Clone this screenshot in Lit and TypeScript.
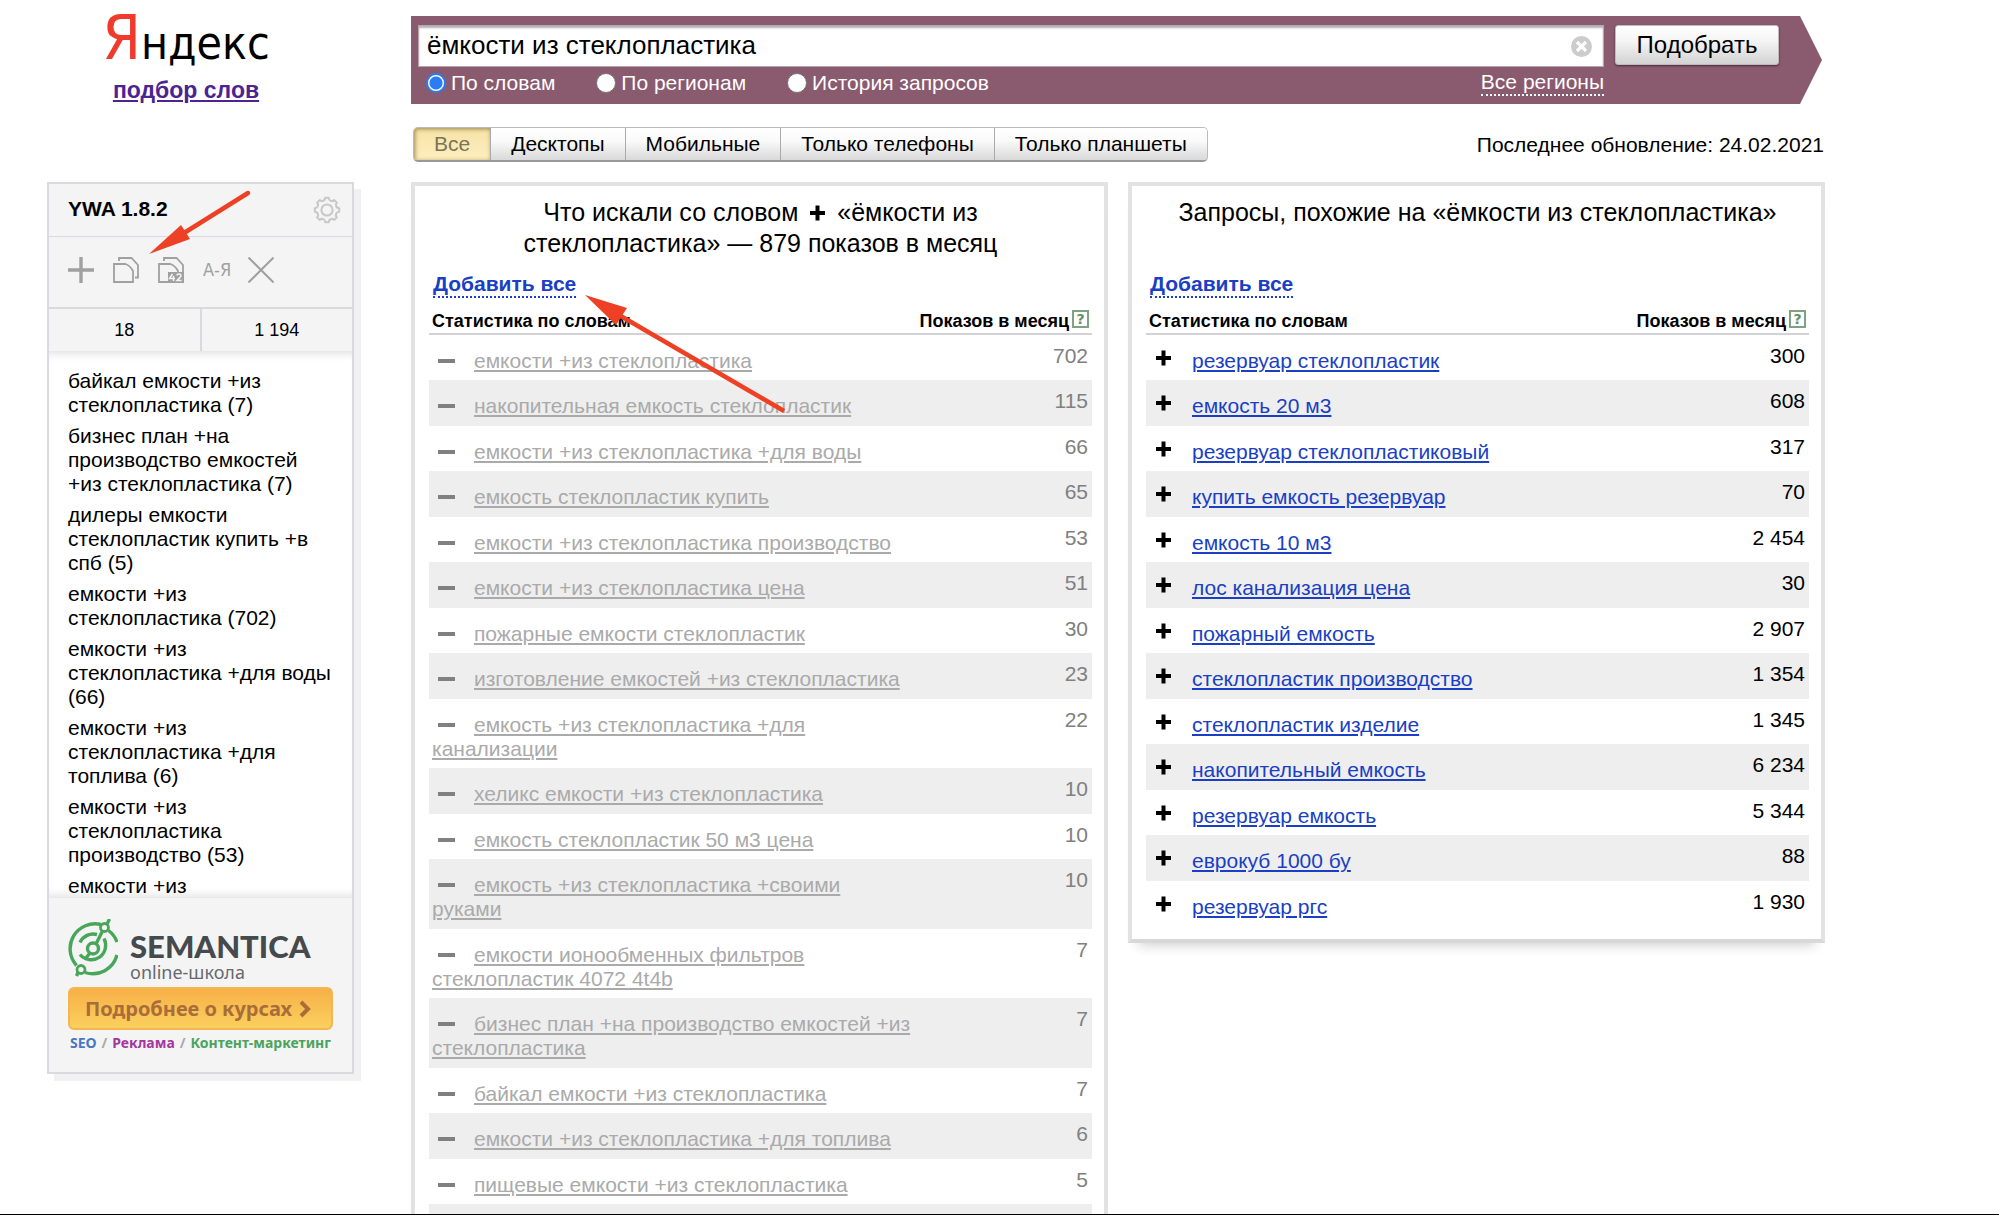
import { LitElement, html, css, svg } from "lit";
import { customElement, property } from "lit/decorators.js";

interface Phrase {
  text: string;
  count: string;
}

const p = (text: string, count: string): Phrase => ({ text, count });

const MATCHED: Phrase[] = [
  p("емкости +из стеклопластика", "702"),
  p("накопительная емкость стеклопластик", "115"),
  p("емкости +из стеклопластика +для воды", "66"),
  p("емкость стеклопластик купить", "65"),
  p("емкости +из стеклопластика производство", "53"),
  p("емкости +из стеклопластика цена", "51"),
  p("пожарные емкости стеклопластик", "30"),
  p("изготовление емкостей +из стеклопластика", "23"),
  p("емкость +из стеклопластика +для канализации", "22"),
  p("хеликс емкости +из стеклопластика", "10"),
  p("емкость стеклопластик 50 м3 цена", "10"),
  p("емкость +из стеклопластика +своими руками", "10"),
  p("емкости ионообменных фильтров стеклопластик 4072 4t4b", "7"),
  p("бизнес план +на производство емкостей +из стеклопластика", "7"),
  p("байкал емкости +из стеклопластика", "7"),
  p("емкости +из стеклопластика +для топлива", "6"),
  p("пищевые емкости +из стеклопластика", "5"),
];

const SIMILAR: Phrase[] = [
  p("резервуар стеклопластик", "300"),
  p("емкость 20 м3", "608"),
  p("резервуар стеклопластиковый", "317"),
  p("купить емкость резервуар", "70"),
  p("емкость 10 м3", "2 454"),
  p("лос канализация цена", "30"),
  p("пожарный емкость", "2 907"),
  p("стеклопластик производство", "1 354"),
  p("стеклопластик изделие", "1 345"),
  p("накопительный емкость", "6 234"),
  p("резервуар емкость", "5 344"),
  p("еврокуб 1000 бу", "88"),
  p("резервуар ргс", "1 930"),
];

const COLLECTED = [
  "байкал емкости +из стеклопластика (7)",
  "бизнес план +на производство емкостей +из стеклопластика (7)",
  "дилеры емкости стеклопластик купить +в спб (5)",
  "емкости +из стеклопластика (702)",
  "емкости +из стеклопластика +для воды (66)",
  "емкости +из стеклопластика +для топлива (6)",
  "емкости +из стеклопластика производство (53)",
  "емкости +из",
];

const MODES = ["По словам", "По регионам", "История запросов"];
const DEVICES = ["Все", "Десктопы", "Мобильные", "Только телефоны", "Только планшеты"];

const shared = css`
  * {
    box-sizing: border-box;
  }
  button {
    font: inherit;
    color: inherit;
    margin: 0;
    padding: 0;
    border: 0;
    background: none;
    cursor: pointer;
  }
  svg {
    display: block;
  }
`;

const plusIcon = html`<svg width="15" height="16" viewBox="0 0 15 16" aria-hidden="true">
  <path d="M7.5 0.5v15M0 8h15" stroke="currentColor" stroke-width="4" />
</svg>`;

const minusIcon = html`<svg width="17" height="16" viewBox="0 0 17 16" aria-hidden="true">
  <path d="M0 8h17" stroke="currentColor" stroke-width="4" />
</svg>`;

/** A bordered panel with a title slot and a table of phrases. */
@customElement("phrase-panel")
export class PhrasePanel extends LitElement {
  @property({ attribute: false }) rows: Phrase[] = [];
  @property({ type: Boolean }) added = false;
  @property({ type: Boolean }) more = false;

  static styles = [
    shared,
    css`
      :host {
        display: block;
        border: 4px solid #e2e2e2;
        border-bottom-color: #d8d8d8;
        background: #fff;
        padding: 11px 12px 13px 14px;
        box-shadow: 0 12px 12px -10px rgba(0, 0, 0, 0.2);
      }
      .title {
        margin: 0;
        padding: 0 26px;
        min-height: 62px;
        font-size: 25px;
        line-height: 31px;
        font-weight: 400;
        text-align: center;
      }
      .add-all {
        display: block;
        margin: 13px 0 10px 4px;
        height: 26px;
        line-height: 24px;
        font-weight: 700;
        color: #1a3fc4;
        border-bottom: 2px dotted #1a3fc4;
      }
      .table {
        width: 100%;
        table-layout: fixed;
        border-collapse: collapse;
      }
      .head {
        padding: 0 3px;
        height: 26px;
        font-size: 18px;
        line-height: 22px;
        border-bottom: 2px solid #d3d1da;
        text-align: left;
        white-space: nowrap;
      }
      .head.phrase {
        width: 73%;
      }
      .head-num {
        display: flex;
        justify-content: flex-end;
        gap: 3px;
      }
      .help {
        width: 17px;
        height: 18px;
        border: 2px solid #7fa283;
        color: #5f9166;
        font: 700 14px/14px "DejaVu Sans", sans-serif;
      }
      .row:nth-child(even) {
        background: #eee;
      }
      .cell {
        vertical-align: top;
        padding: 14px 1px 7px 3px;
        line-height: 24px;
      }
      .row:nth-child(even) .cell {
        padding-bottom: 8px;
      }
      .cell.num,
      .row:nth-child(even) .cell.num {
        padding: 9px 4px 0 0;
        text-align: right;
      }
      .toggle {
        width: 42px;
        height: 16px;
        padding-left: 6px;
        vertical-align: -1px;
      }
      .toggle.plus {
        width: 43px;
        padding-left: 7px;
        vertical-align: 2px;
      }
      .link {
        color: #1a3fc4;
      }
      .added .link {
        color: #aaa;
      }
      .added .cell {
        color: #808080;
      }
    `,
  ];

  render() {
    return html`
      <h2 class="title"><slot></slot></h2>
      <button class="add-all">Добавить все</button>
      <table class="table ${this.added ? "added" : ""}">
        <thead>
          <tr>
            <th class="head phrase">Статистика по словам</th>
            <th class="head">
              <div class="head-num">Показов в месяц<button class="help">?</button></div>
            </th>
          </tr>
        </thead>
        <tbody>
          ${this.rows.map(
            (r) => html`<tr class="row">
              <td class="cell"><button class="toggle ${this.added ? "minus" : "plus"}">${this.added ? minusIcon : plusIcon}</button><a class="link" href="#">${r.text}</a></td>
              <td class="cell num">${r.count}</td>
            </tr>`,
          )}
          ${this.more ? html`<tr class="row"><td class="cell">&nbsp;</td><td class="cell num"></td></tr>` : null}
        </tbody>
      </table>
    `;
  }
}

/** The side widget that collects chosen phrases. */
@customElement("phrase-collector")
export class PhraseCollector extends LitElement {
  static styles = [
    shared,
    css`
      :host {
        display: flex;
        flex-direction: column;
        height: 892px;
        border: 2px solid #d9dadf;
        background: #f4f4f4;
        box-shadow: 7px 7px 0 #f1f1f1;
      }
      .header {
        display: flex;
        align-items: center;
        justify-content: space-between;
        height: 53px;
        padding: 0 11px 0 19px;
        border-bottom: 1px solid #d9dadf;
      }
      .name {
        margin: 0;
        padding-bottom: 2px;
        font-size: 21px;
        line-height: 24px;
      }
      .gear {
        color: #c8c8c8;
      }
      .tools {
        display: flex;
        gap: 19px;
        height: 72px;
        padding: 20px 19px 0;
        border-bottom: 2px solid #d9dadf;
        color: #a0a0a0;
      }
      .tool {
        flex: none;
        width: 26px;
        height: 26px;
      }
      .sort {
        font-family: "DejaVu Sans Condensed", "DejaVu Sans", sans-serif;
        font-size: 18px;
        line-height: 26px;
        white-space: nowrap;
      }
      .counts {
        display: flex;
        height: 42px;
        font-size: 18px;
        line-height: 42px;
        text-align: center;
      }
      .count {
        flex: 1;
      }
      .count + .count {
        border-left: 2px solid #d9dadf;
      }
      .list {
        flex: 1;
        min-height: 0;
        overflow: hidden;
        display: flex;
        flex-direction: column;
        gap: 7px;
        margin: 0;
        padding: 18px 16px 0 19px;
        list-style: none;
        line-height: 24px;
        background: #fff;
        box-shadow:
          inset 0 10px 10px -8px rgba(0, 0, 0, 0.14),
          inset 0 -10px 10px -8px rgba(0, 0, 0, 0.14);
      }
      .item {
        flex: none;
      }
      .promo {
        flex: none;
        height: 174px;
        padding: 21px 19px 0;
      }
      .brand {
        display: flex;
        gap: 12px;
        height: 58px;
      }
      .brand-name {
        padding-top: 10px;
        color: #464a4d;
        font: 900 31px/34px Lato, sans-serif;
      }
      .brand-sub {
        color: #666a6c;
        font: 400 18px/18px "Noto Sans", sans-serif;
      }
      .more {
        display: flex;
        align-items: center;
        justify-content: space-between;
        width: 100%;
        height: 43px;
        margin-top: 10px;
        padding: 0 20px 0 15px;
        border: 2px solid #f3b650;
        border-radius: 6px;
        background: linear-gradient(#f7b047, #fbd05e);
        color: #a86d39;
        font: 700 20px/24px "Noto Sans", sans-serif;
        white-space: nowrap;
      }
      .topics {
        display: flex;
        justify-content: space-between;
        padding: 3px 2px 0;
        font: 700 14px/20px "Noto Sans", sans-serif;
        color: #aaa;
      }
      .seo {
        color: #4a78bf;
      }
      .ads {
        color: #a4399d;
      }
      .content {
        color: #4ba35c;
      }
    `,
  ];

  render() {
    const teeth = Array.from({ length: 8 }, (_, i) => i * 45);
    return html`
      <div class="header">
        <h1 class="name">YWA 1.8.2</h1>
        <button class="gear" aria-label="Настройки">
          <svg width="28" height="28" viewBox="0 0 28 28" fill="none" stroke="currentColor" stroke-width="2" stroke-linejoin="round">
            <circle cx="14" cy="14" r="5.6" />
            ${teeth.map(
              (a) => svg`<path transform="rotate(${a} 14 14)" d="M10.6 4.6 Q12 4.2 12.2 1.8 H15.8 Q16 4.2 17.4 4.6 Q18.8 5.6 20.4 4.6" />`,
            )}
          </svg>
        </button>
      </div>
      <div class="tools">
        <button class="tool" aria-label="Добавить">
          <svg width="26" height="26" viewBox="0 0 26 26"><path d="M13 0v26M0 13h26" stroke="currentColor" stroke-width="3.4" /></svg>
        </button>
        <button class="tool" aria-label="Копировать">
          <svg width="26" height="26" viewBox="0 0 26 26" fill="none" stroke="currentColor" stroke-width="1.8">
            <path d="M1 25V7h11.500q5 2 7.500 7v11z" />
            <path d="M6 4V1h12.500L25 8v12.500h-3" />
          </svg>
        </button>
        <button class="tool" aria-label="Копировать с частотностью">
          <svg width="26" height="26" viewBox="0 0 26 26" fill="none" stroke="currentColor" stroke-width="1.8">
            <path d="M10 25H1V7h11.500q5 2 7.500 7v1" />
            <path d="M6 4V1h12.500L25 8v17" />
            <path d="M10 15h16v11H10z" fill="currentColor" stroke="none" />
            <path d="M14.500 17l-3 4.500h5.500M15.500 19v5M19 18.500q0-1.500 2-1.500t2 1.800q0 1-4 4.700h4.600" stroke="#f4f4f4" stroke-width="1.5" />
          </svg>
        </button>
        <button class="tool sort">А-Я</button>
        <button class="tool" aria-label="Очистить">
          <svg width="26" height="26" viewBox="0 0 26 26"><path d="M0.5 0.5l25 25M25.5 0.5l-25 25" stroke="currentColor" stroke-width="2" /></svg>
        </button>
      </div>
      <div class="counts">
        <div class="count">18</div>
        <div class="count">1 194</div>
      </div>
      <ul class="list">
        ${COLLECTED.map((t) => html`<li class="item">${t}</li>`)}
      </ul>
      <div class="promo">
        <div class="brand">
          <svg width="50" height="58" viewBox="0 0 50 58" fill="none" stroke="#48a65a" stroke-width="3.4">
            <path d="M33 5.5A25 25 0 0 0 8.500 46.500M17 53.500A25 25 0 0 0 49 36" />
            <path d="M40.500 11.500A25 25 0 0 1 49 23" />
            <circle cx="36.500" cy="8.500" r="4" stroke-width="2.800" />
            <circle cx="13" cy="50.500" r="4" stroke-width="2.800" />
            <path d="M39 5l2.500-5M10 53.500l-1.500 3.500" />
            <circle cx="25" cy="29.500" r="5.500" />
            <path d="M28 25l6.500-13M22 34l-4 5" />
            <path d="M12 23.500A14.500 14.500 0 0 1 29 15.500M36 19.500A14.500 14.500 0 0 1 12 35.500" />
          </svg>
          <div>
            <div class="brand-name">SEMANTICA</div>
            <div class="brand-sub">online-школа</div>
          </div>
        </div>
        <button class="more">
          Подробнее о курсах
          <svg width="12" height="18" viewBox="0 0 12 18" fill="none" stroke="currentColor" stroke-width="4"><path d="M2 2l7 7-7 7" /></svg>
        </button>
        <div class="topics">
          <span class="seo">SEO</span><span>/</span><span class="ads">Реклама</span><span>/</span><span class="content">Контент-маркетинг</span>
        </div>
      </div>
    `;
  }
}

@customElement("app-root")
export class AppRoot extends LitElement {
  static styles = [
    shared,
    css`
      :host {
        display: block;
        position: relative;
        height: 100vh;
        overflow: hidden;
        border-bottom: 1px solid #000;
        background: #fff;
        color: #000;
        font-family: "Liberation Sans", Arial, sans-serif;
        font-size: 21px;
        box-sizing: border-box;
      }
      .page {
        display: flex;
        align-items: flex-start;
        gap: 57px;
        padding: 0 174px 0 47px;
      }
      .side {
        flex: none;
        width: 307px;
      }
      .logo {
        display: flex;
        flex-direction: column;
        align-items: center;
        height: 182px;
        padding-right: 29px;
      }
      .wordmark {
        display: flex;
        align-items: baseline;
        height: 76px;
        font-family: "DejaVu Sans Condensed", "DejaVu Sans", sans-serif;
        font-size: 46px;
        line-height: 76px;
      }
      .wordmark-first {
        color: #f03a2b;
        font-size: 62px;
      }
      .logo-link {
        font-size: 23px;
        line-height: 28px;
        font-weight: 700;
        color: #4b2491;
      }
      .main {
        flex: 1;
        min-width: 0;
        padding-top: 16px;
      }
      .search {
        display: grid;
        grid-template-columns: 1fr 164px;
        column-gap: 11px;
        align-content: start;
        height: 88px;
        margin-right: 3px;
        padding: 9px 43px 0 7px;
        background: #8a5a6f;
        clip-path: polygon(0 0, calc(100% - 22px) 0, 100% 50%, calc(100% - 22px) 100%, 0 100%);
      }
      .field {
        display: flex;
        align-items: center;
        height: 42px;
        padding: 0 11px 0 8px;
        background: #fff;
        border: 1px solid #b9a5ae;
        box-shadow: inset 0 2px 2px rgba(0, 0, 0, 0.3);
      }
      .query {
        flex: 1;
        min-width: 0;
        padding: 0 0 2px;
        border: 0;
        outline: 0;
        background: none;
        color: #000;
        font: 26px/32px "Liberation Sans", Arial, sans-serif;
      }
      .submit {
        height: 40px;
        border: 1px solid #c4b9be;
        border-radius: 3px;
        background: linear-gradient(#fff, #f4f4f4 40%, #d2d2d2);
        box-shadow: 0 1px 2px rgba(0, 0, 0, 0.5);
        font-size: 24px;
      }
      .modes {
        display: flex;
        align-items: center;
        gap: 41px;
        height: 32px;
        padding-left: 8px;
        color: #fff;
      }
      .mode {
        display: flex;
        align-items: center;
        gap: 5px;
      }
      .radio {
        appearance: none;
        width: 20px;
        height: 20px;
        margin: 0;
        border: 1px solid #777;
        border-radius: 50%;
        background: #fff;
      }
      .radio:checked {
        border: 2px solid #2a7bf6;
        background: radial-gradient(circle, #2a7bf6 6px, #fff 7px);
      }
      .regions {
        margin-left: auto;
        color: #fff;
        line-height: 24px;
        text-decoration: none;
        border-bottom: 2px dotted #fff;
      }
      .bar {
        display: flex;
        align-items: center;
        justify-content: space-between;
        margin: 23px 1px 20px 2px;
        height: 35px;
        line-height: 24px;
      }
      .devices {
        display: flex;
        height: 35px;
        border: 1px solid #bbb;
        border-bottom: 2px solid #999;
        border-radius: 5px;
        overflow: hidden;
      }
      .device {
        padding: 0 20px;
        background: linear-gradient(#fff, #fafafa 40%, #d9d9d9);
      }
      .device + .device {
        border-left: 1px solid #aaa;
      }
      .device.active {
        color: #7d7358;
        background: linear-gradient(#f6e3a6, #fdeebf);
        box-shadow: inset 1px 1px 4px rgba(90, 70, 10, 0.6);
      }
      .panels {
        display: grid;
        grid-template-columns: 1fr 1fr;
        gap: 20px;
        align-items: start;
      }
      .title-plus {
        display: inline-block;
        margin: 0 5px;
      }
      .arrows {
        position: absolute;
        left: 0;
        top: 0;
        pointer-events: none;
      }
    `,
  ];

  render() {
    return html`
      <div class="page">
        <aside class="side">
          <div class="logo">
            <div class="wordmark"><span class="wordmark-first">Я</span>ндекс</div>
            <a class="logo-link" href="#">подбор слов</a>
          </div>
          <phrase-collector></phrase-collector>
        </aside>
        <main class="main">
          <form class="search">
            <div class="field">
              <input class="query" type="text" aria-label="Запрос" value="ёмкости из стеклопластика" />
              <button class="clear" type="button" aria-label="Очистить">
                <svg width="21" height="21" viewBox="0 0 21 21">
                  <circle cx="10.500" cy="10.500" r="10.500" fill="#ccc" />
                  <path d="M6 6l9 9M15 6l-9 9" stroke="#fff" stroke-width="3.200" />
                </svg>
              </button>
            </div>
            <button class="submit" type="button">Подобрать</button>
            <div class="modes">
              ${MODES.map(
                (m, i) => html`<label class="mode"><input class="radio" type="radio" name="mode" ?checked=${i === 0} />${m}</label>`,
              )}
              <a class="regions" href="#">Все регионы</a>
            </div>
          </form>
          <div class="bar">
            <div class="devices">
              ${DEVICES.map((d, i) => html`<button class="device ${i === 0 ? "active" : ""}">${d}</button>`)}
            </div>
            <span>Последнее обновление: 24.02.2021</span>
          </div>
          <div class="panels">
            <phrase-panel .rows=${MATCHED} added more>
              Что искали со словом <span class="title-plus">${plusIcon}</span> «ёмкости из стеклопластика» — 879 показов в месяц
            </phrase-panel>
            <phrase-panel .rows=${SIMILAR}>Запросы, похожие на «ёмкости из стеклопластика»</phrase-panel>
          </div>
        </main>
      </div>
      <svg class="arrows" width="800" height="420" viewBox="0 0 800 420" fill="#ee4024" stroke="#ee4024" aria-hidden="true">
        <path d="M248 193L184 233" stroke-width="4.500" stroke-linecap="round" />
        <path d="M149 254L181 225L190 239Z" stroke="none" />
        <path d="M784 411L619 315" stroke-width="4.500" stroke-linecap="butt" />
        <path d="M585 295L627 308L616 325Z" stroke="none" />
      </svg>
    `;
  }
}
